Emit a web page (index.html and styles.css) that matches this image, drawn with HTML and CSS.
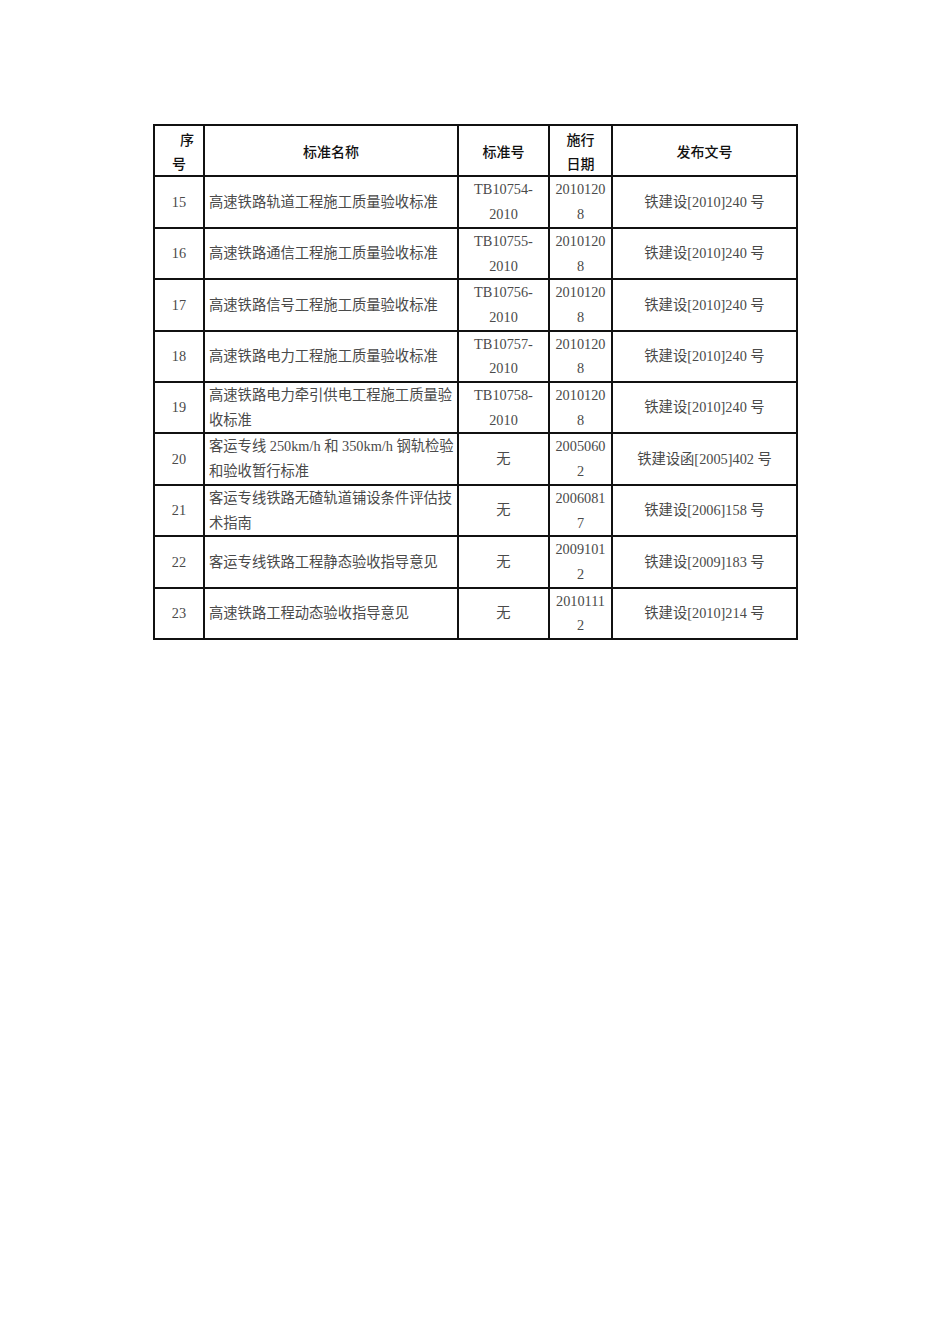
FILE: index.html
```html
<!DOCTYPE html>
<html lang="zh-CN">
<head>
<meta charset="utf-8">
<title>高速铁路标准</title>
<link rel="stylesheet" href="styles.css">
</head>
<body>
<table class="std">
  <colgroup>
    <col class="c-no">
    <col class="c-name">
    <col class="c-code">
    <col class="c-date">
    <col class="c-doc">
  </colgroup>
  <thead>
    <tr>
      <th><span class="first">序</span><span class="second">号</span></th>
      <th>标准名称</th>
      <th>标准号</th>
      <th>施行<br>日期</th>
      <th>发布文号</th>
    </tr>
  </thead>
  <tbody>
    <tr><td class="ctr">15</td><td class="name">高速铁路轨道工程施工质量验收标准</td><td class="ctr">TB10754-<br>2010</td><td class="ctr">2010120<br>8</td><td class="ctr">铁建设[2010]240 号</td></tr>
    <tr><td class="ctr">16</td><td class="name">高速铁路通信工程施工质量验收标准</td><td class="ctr">TB10755-<br>2010</td><td class="ctr">2010120<br>8</td><td class="ctr">铁建设[2010]240 号</td></tr>
    <tr><td class="ctr">17</td><td class="name">高速铁路信号工程施工质量验收标准</td><td class="ctr">TB10756-<br>2010</td><td class="ctr">2010120<br>8</td><td class="ctr">铁建设[2010]240 号</td></tr>
    <tr><td class="ctr">18</td><td class="name">高速铁路电力工程施工质量验收标准</td><td class="ctr">TB10757-<br>2010</td><td class="ctr">2010120<br>8</td><td class="ctr">铁建设[2010]240 号</td></tr>
    <tr><td class="ctr">19</td><td class="name">高速铁路电力牵引供电工程施工质量验<br>收标准</td><td class="ctr">TB10758-<br>2010</td><td class="ctr">2010120<br>8</td><td class="ctr">铁建设[2010]240 号</td></tr>
    <tr><td class="ctr">20</td><td class="name">客运专线 250km/h 和 350km/h 钢轨检验<br>和验收暂行标准</td><td class="ctr">无</td><td class="ctr">2005060<br>2</td><td class="ctr">铁建设函[2005]402 号</td></tr>
    <tr><td class="ctr">21</td><td class="name">客运专线铁路无碴轨道铺设条件评估技<br>术指南</td><td class="ctr">无</td><td class="ctr">2006081<br>7</td><td class="ctr">铁建设[2006]158 号</td></tr>
    <tr><td class="ctr">22</td><td class="name">客运专线铁路工程静态验收指导意见</td><td class="ctr">无</td><td class="ctr">2009101<br>2</td><td class="ctr">铁建设[2009]183 号</td></tr>
    <tr><td class="ctr">23</td><td class="name">高速铁路工程动态验收指导意见</td><td class="ctr">无</td><td class="ctr">2010111<br>2</td><td class="ctr">铁建设[2010]214 号</td></tr>
  </tbody>
</table>
</body>
</html>
```

FILE: styles.css
```css
html, body {
  margin: 0;
  padding: 0;
  background: #ffffff;
}

body {
  font-family: "Liberation Serif", "Noto Sans CJK SC", serif;
  font-size: 14.3px;
  color: #4a4a4a;
}

.std {
  border-collapse: collapse;
  table-layout: fixed;
  width: 643px;
  margin: 124px 0 0 153px;
}

.c-no { width: 50px; }
.c-name { width: 254px; }
.c-code { width: 91px; }
.c-date { width: 63px; }
.c-doc { width: 185px; }

.std th,
.std td {
  border: 2px solid #111111;
  padding: 0 4px;
  height: 49.4px;
  line-height: 24.7px;
  vertical-align: middle;
  white-space: nowrap;
}

.std th {
  font-family: "Noto Sans CJK SC", sans-serif;
  font-size: 14px;
  font-weight: 500;
  color: #111111;
  text-align: center;
  line-height: 24px;
}

.std th .first,
.std th .second {
  display: block;
}

.std th .first {
  padding-left: 16px;
}

.ctr {
  text-align: center;
}

.name {
  text-align: left;
  padding-left: 5px;
}
```
